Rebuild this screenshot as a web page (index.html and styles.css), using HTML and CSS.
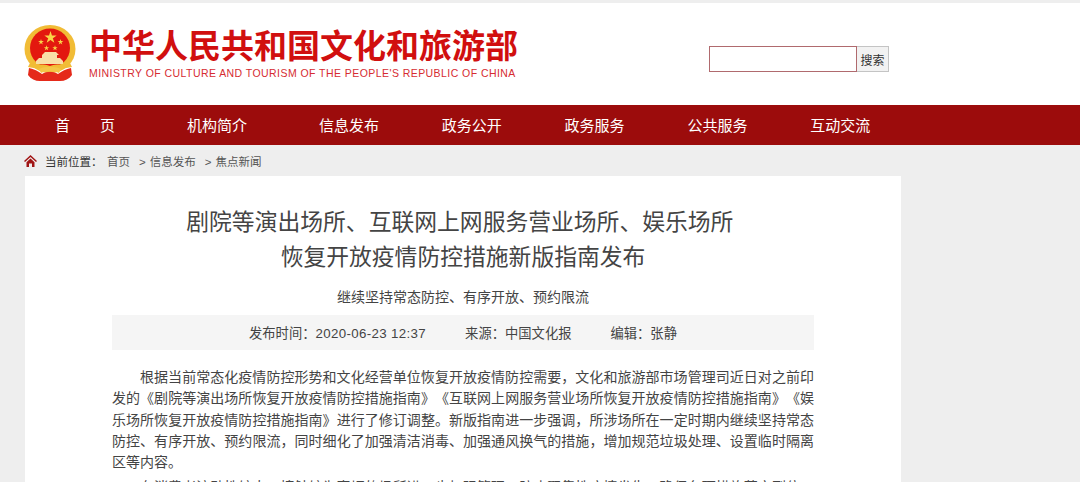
FILE: index.html
```html
<!DOCTYPE html>
<html lang="zh-CN">
<head>
  <meta charset="UTF-8">
  <title>剧院等演出场所、互联网上网服务营业场所、娱乐场所恢复开放疫情防控措施新版指南发布</title>
  <link rel="stylesheet" href="styles.css">
</head>
<body>
  <header class="header">
    <div class="logo">
      <svg class="emblem" width="52" height="57" viewBox="0 0 52 57">
        <defs>
          <path id="star" d="M0-1L.588.809-.951-.309H.951L-.588.809z" fill="#f9d648"/>
        </defs>
        <ellipse cx="26" cy="24" rx="25.500" ry="24" fill="#f1bc36"/>
        <ellipse cx="26" cy="23" rx="20" ry="19.500" fill="#e3180f"/>
        <use href="#star" transform="translate(26.500 12.500) scale(6.500)"/>
        <use href="#star" transform="translate(17 17) scale(3)"/>
        <use href="#star" transform="translate(36.500 17) scale(3)"/>
        <use href="#star" transform="translate(22.500 23) scale(2.800)"/>
        <use href="#star" transform="translate(31 23) scale(2.800)"/>
        <path d="M18 30l3-3h11l3 3h-2v3h3l3 3v3H12v-3l3-3h3z" fill="#f8dfa8"/>
        <path d="M6 38c6 3 14 0 20 3 6-3 14 0 20-3l2 4-22 4-22-4z" fill="#f1bc36"/>
        <path d="M5 43c5 1 9 3 13 6 5-3 11-3 16 0 4-3 8-5 13-6l1 7c-3 4-7 6-12 6H16c-5 0-9-2-12-6z" fill="#e52a1a"/>
        <path d="M15 44c6-3 16-3 22 0l-2 4c-5-2-13-2-18 0z" fill="#f4c648"/>
      </svg>
      <div class="logo-text">
        <div class="logo-cn">中华人民共和国文化和旅游部</div>
        <div class="logo-en">MINISTRY OF CULTURE AND TOURISM OF THE PEOPLE'S REPUBLIC OF CHINA</div>
      </div>
    </div>
    <form class="search">
      <input class="search-input" type="text">
      <button class="search-btn" type="button">搜索</button>
    </form>
  </header>

  <nav class="nav">
    <a class="nav-item nav-wide" href="#">首　　页</a>
    <a class="nav-item nav-wide" href="#">机构简介</a>
    <a class="nav-item" href="#">信息发布</a>
    <a class="nav-item" href="#">政务公开</a>
    <a class="nav-item" href="#">政务服务</a>
    <a class="nav-item" href="#">公共服务</a>
    <a class="nav-item" href="#">互动交流</a>
  </nav>

  <div class="crumbs">
    <svg class="home-icon" width="13" height="12" viewBox="0 0 13 12">
      <path d="M6.500 0L0 6l1 1 5.500-5 5.500 5 1-1z" fill="#a01414"/>
      <path d="M2.500 7.200L6.500 3.600l4 3.600V12H8V8.500H5V12H2.500z" fill="#a01414"/>
    </svg>
    <span class="crumb-label">当前位置：</span>
    <a class="crumb" href="#">首页</a>
    <a class="crumb crumb-next" href="#">信息发布</a>
    <a class="crumb crumb-next" href="#">焦点新闻</a>
  </div>

  <main class="article">
    <h1 class="title">剧院等演出场所、互联网上网服务营业场所、娱乐场所&nbsp;<br>恢复开放疫情防控措施新版指南发布</h1>
    <h2 class="subtitle">继续坚持常态防控、有序开放、预约限流</h2>
    <div class="meta">
      <span>发布时间：<span class="meta-date">2020-06-23 12:37</span></span>
      <span>来源：中国文化报</span>
      <span>编辑：张静</span>
    </div>
    <div class="body">
      <p>根据当前常态化疫情防控形势和文化经营单位恢复开放疫情防控需要，文化和旅游部市场管理司近日对之前印发的《剧院等演出场所恢复开放疫情防控措施指南》《互联网上网服务营业场所恢复开放疫情防控措施指南》《娱乐场所恢复开放疫情防控措施指南》进行了修订调整。新版指南进一步强调，所涉场所在一定时期内继续坚持常态防控、有序开放、预约限流，同时细化了加强清洁消毒、加强通风换气的措施，增加规范垃圾处理、设置临时隔离区等内容。</p>
      <p>在消费者流动性较大、接触较为密切的场所进一步加强管理，防止聚集性疫情发生，确保各项措施落实到位，切实保障安全。</p>
    </div>
  </main>
</body>
</html>
```

FILE: styles.css
```css
html, body {
  margin: 0;
  padding: 0;
}

body {
  height: 482px;
  overflow: hidden;
  padding-top: 3px;
  box-sizing: border-box;
  background-color: #eeeeee;
  font-family: "Liberation Sans", "Noto Sans CJK SC", sans-serif;
  color: #333;
}

a {
  color: inherit;
  text-decoration: none;
}

/* header */
.header {
  height: 102px;
  background-color: #fff;
  display: flex;
  align-items: flex-start;
}

.logo {
  display: flex;
  margin: 22px 0 0 24px;
}

.emblem {
  flex: none;
}

.logo-text {
  margin: 4px 0 0 13px;
}

.logo-cn {
  font-size: 33px;
  line-height: 36px;
  font-weight: 700;
  color: #d10f0f;
  white-space: nowrap;
}

.logo-en {
  margin-top: 2px;
  font-size: 10.500px;
  line-height: 13px;
  letter-spacing: 0.440px;
  color: #d62c32;
  white-space: nowrap;
}

.search {
  display: flex;
  margin: 43px 0 0 191px;
}

.search-input {
  width: 148px;
  height: 26px;
  box-sizing: border-box;
  padding: 0;
  border: 1px solid #b06a6e;
  background-color: #fff;
}

.search-btn {
  width: 32px;
  height: 26px;
  box-sizing: border-box;
  padding: 0;
  border: 1px solid #c4c4c4;
  border-left: 0;
  background-color: #f2f2f2;
  font-family: inherit;
  font-size: 12px;
  color: #333;
}

/* nav */
.nav {
  height: 40px;
  box-sizing: border-box;
  padding: 0 0 1px 55px;
  display: flex;
  align-items: center;
  background-color: #9c0c0c;
}

.nav-item {
  width: 122.800px;
  font-size: 15px;
  color: #fff;
  white-space: nowrap;
}

.nav-wide {
  width: 132px;
}

/* breadcrumb */
.crumbs {
  height: 31px;
  display: flex;
  align-items: center;
  padding-left: 24px;
  font-size: 11.500px;
  color: #555;
}

.home-icon {
  margin-right: 8px;
}

.crumb-label {
  width: 62px;
  color: #333;
}

.crumb-next {
  margin-left: 9px;
}

.crumb-next::before {
  content: ">";
  margin-right: 4px;
}

/* article */
.article {
  width: 702px;
  height: 306px;
  margin-left: 25px;
  padding: 0 87px;
  background-color: #fff;
  overflow: hidden;
}

.title {
  margin: 29px 0 0;
  font-size: 22.800px;
  line-height: 35px;
  font-weight: 400;
  text-align: center;
  color: #444;
}

.subtitle {
  margin: 12px 0 0;
  font-size: 14px;
  line-height: 20px;
  font-weight: 400;
  text-align: center;
  color: #444;
}

.meta {
  height: 35px;
  margin-top: 8px;
  display: flex;
  justify-content: center;
  align-items: center;
  gap: 39px;
  background-color: #f5f5f5;
  font-size: 13.300px;
  color: #444;
}

.meta-date {
  letter-spacing: 0.350px;
}

.body {
  margin-top: 17px;
  font-size: 14px;
  line-height: 21.300px;
  color: #444;
  text-spacing-trim: space-all;
}

.body p {
  margin: 0 0 3.700px;
  text-indent: 2em;
  text-align: justify;
}
```
